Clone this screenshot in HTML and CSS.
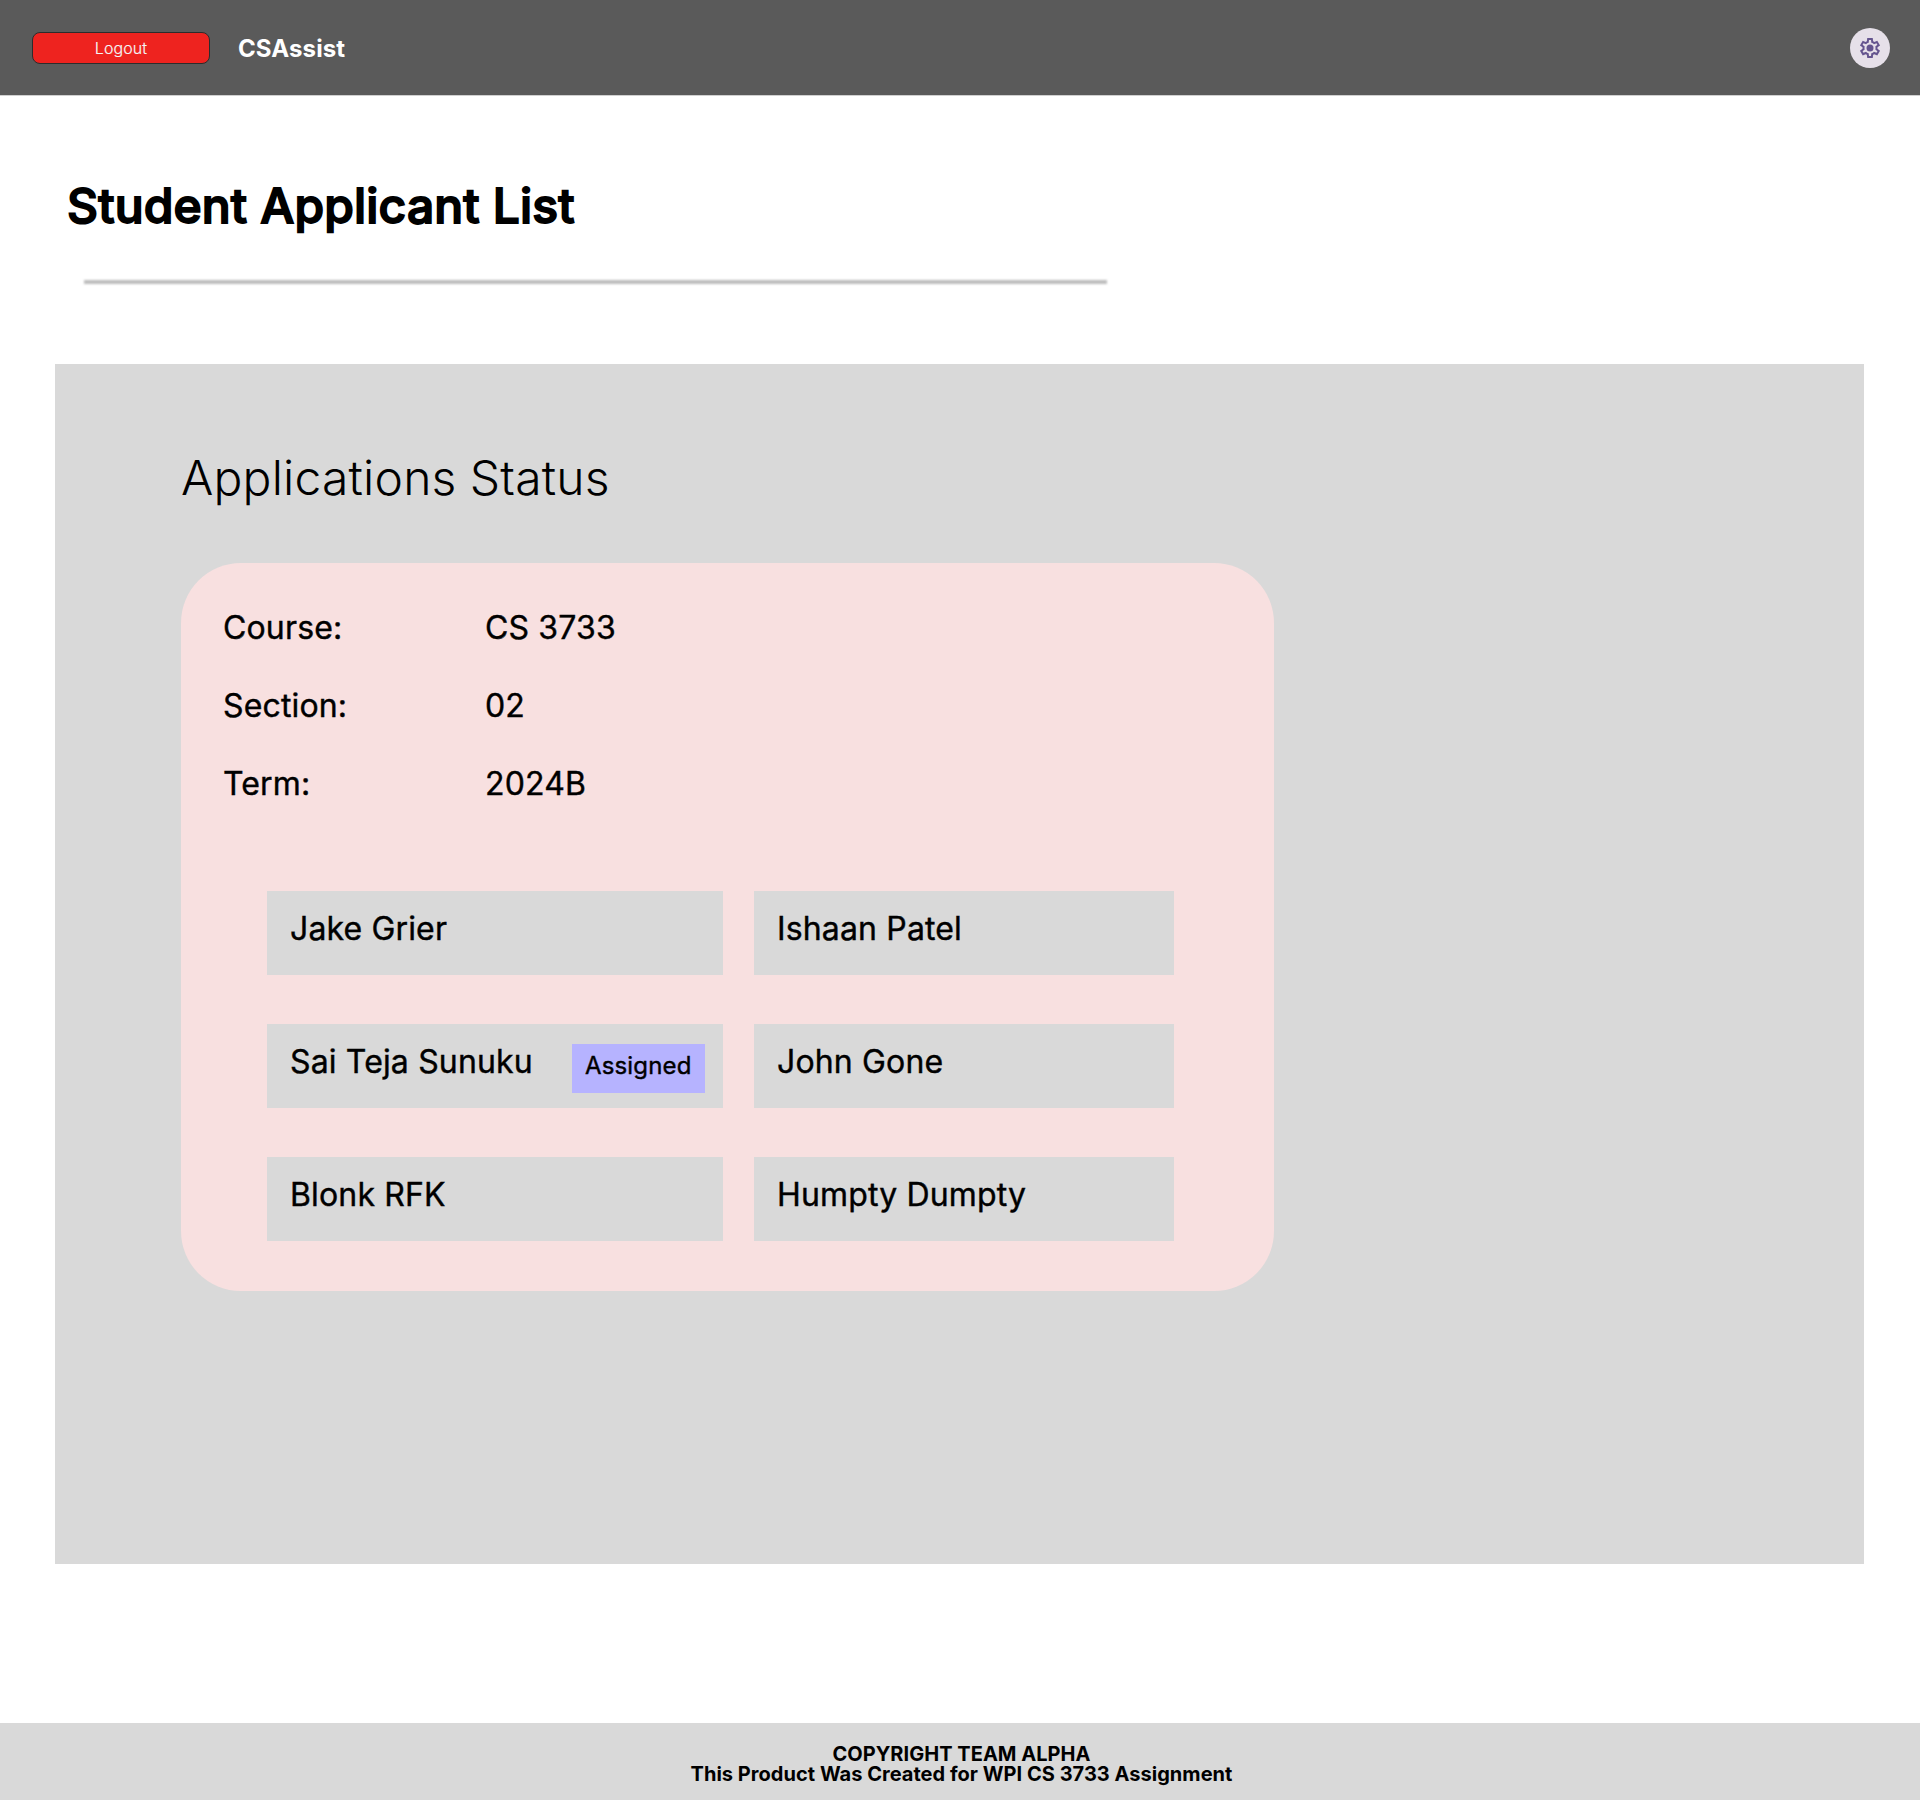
FILE: index.html
```html
<!DOCTYPE html>
<html lang="en">
<head>
<meta charset="utf-8">
<title>CSAssist - Student Applicant List</title>
<link rel="stylesheet" href="styles.css">
</head>
<body>
<header class="topbar">
  <button class="logout" type="button">Logout</button>
  <span class="brand">CSAssist</span>
  <button class="settings" type="button" aria-label="Settings">
    <svg class="settings-icon" viewBox="0 0 24 24" aria-hidden="true">
      <path fill-rule="evenodd" d="M9.25 22L8.85 18.8C8.63 18.72 8.43 18.62 8.24 18.5C8.05 18.38 7.86 18.26 7.675 18.125L4.7 19.375L1.95 14.625L4.525 12.675C4.51 12.56 4.5 12.45 4.5 12.34V11.66C4.5 11.55 4.51 11.44 4.525 11.325L1.95 9.375L4.7 4.625L7.675 5.875C7.86 5.74 8.05 5.62 8.25 5.5C8.45 5.38 8.65 5.28 8.85 5.2L9.25 2H14.75L15.15 5.2C15.37 5.28 15.57 5.38 15.76 5.5C15.95 5.62 16.14 5.74 16.325 5.875L19.3 4.625L22.05 9.375L19.475 11.325C19.49 11.44 19.5 11.55 19.5 11.66V12.34C19.5 12.45 19.48 12.56 19.45 12.675L22.025 14.625L19.275 19.375L16.325 18.125C16.14 18.26 15.95 18.38 15.75 18.5C15.55 18.62 15.35 18.72 15.15 18.8L14.75 22H9.25ZM11 20H12.975L13.325 17.35C13.84 17.22 14.32 17.02 14.76 16.76C15.2 16.5 15.61 16.19 15.975 15.825L18.45 16.85L19.425 15.15L17.275 13.525C17.36 13.29 17.42 13.05 17.45 12.79C17.48 12.53 17.5 12.27 17.5 12C17.5 11.73 17.48 11.47 17.45 11.21C17.42 10.95 17.36 10.71 17.275 10.475L19.425 8.85L18.45 7.15L15.975 8.2C15.61 7.82 15.2 7.5 14.76 7.24C14.32 6.98 13.84 6.78 13.325 6.65L13 4H11.025L10.675 6.65C10.16 6.78 9.68 6.98 9.24 7.24C8.8 7.5 8.39 7.81 8.025 8.175L5.55 7.15L4.575 8.85L6.725 10.45C6.64 10.7 6.58 10.95 6.55 11.2C6.52 11.45 6.5 11.72 6.5 12C6.5 12.27 6.52 12.53 6.55 12.775C6.58 13.03 6.64 13.28 6.725 13.525L4.575 15.15L5.55 16.85L8.025 15.8C8.39 16.18 8.8 16.5 9.24 16.76C9.68 17.02 10.16 17.22 10.675 17.35L11 20Z"/>
      <circle cx="12" cy="12" r="3.5"/>
    </svg>
  </button>
</header>

<main class="page">
  <h1 class="page-title">Student Applicant List</h1>
  <hr class="divider">
  <section class="panel">
    <h2 class="panel-title">Applications Status</h2>
    <article class="card">
      <dl class="details">
        <dt>Course:</dt><dd>CS 3733</dd>
        <dt>Section:</dt><dd>02</dd>
        <dt>Term:</dt><dd>2024B</dd>
      </dl>
      <ul class="applicants">
        <li class="applicant">Jake Grier</li>
        <li class="applicant">Ishaan Patel</li>
        <li class="applicant">Sai Teja Sunuku <span class="badge">Assigned</span></li>
        <li class="applicant">John Gone</li>
        <li class="applicant">Blonk RFK</li>
        <li class="applicant">Humpty Dumpty</li>
      </ul>
    </article>
  </section>
</main>

<footer class="footer">
  <p>COPYRIGHT TEAM ALPHA<br>This Product Was Created for WPI CS 3733 Assignment</p>
</footer>
</body>
</html>
```
FILE: styles.css
```css
* {
  box-sizing: border-box;
  margin: 0;
  padding: 0;
}

body {
  display: flex;
  flex-direction: column;
  height: 1800px;
  background: #fff;
  color: #000;
  font-family: Inter, "Liberation Sans", sans-serif;
}

.topbar {
  display: flex;
  align-items: center;
  flex: none;
  height: 96px;
  padding: 0 30px 0 32px;
  background: #5a5a5a;
  border-bottom: 1px solid #d0d0d0;
}

.logout {
  width: 178px;
  height: 32px;
  border: 1px solid #2c2c2c;
  border-radius: 8px;
  background: #ee231f;
  color: #f5f5f5;
  font: 300 16px/30px Inter, "Liberation Sans", sans-serif;
  letter-spacing: 0.1px;
  -webkit-text-stroke: 0.15px #f5f5f5;
}

.brand {
  margin-left: 28px;
  padding-top: 2px;
  color: #fff;
  font-size: 24px;
  font-weight: 700;
  line-height: 30px;
  letter-spacing: 0.1px;
}

.settings {
  display: flex;
  align-items: center;
  justify-content: center;
  width: 40px;
  height: 40px;
  margin-left: auto;
  border: 0;
  border-radius: 50%;
  background: #e6e0e9;
}

.settings-icon {
  width: 24px;
  height: 24px;
  fill: #65558f;
}

.page {
  flex: 1;
  padding: 80px 56px 0 55px;
}

.page-title {
  margin-left: 12px;
  font-size: 48px;
  font-weight: 500;
  line-height: 60px;
  letter-spacing: 0.15px;
  -webkit-text-stroke: 1.8px #000;
}

.divider {
  width: 1023px;
  height: 4px;
  margin: 44px 0 80px 29px;
  border: 0;
  background: #bdbdbd;
  filter: blur(1px);
}

.panel {
  height: 1200px;
  padding: 84px 0 0 126px;
  background: #d9d9d9;
}

.panel-title {
  font-size: 48px;
  font-weight: 300;
  line-height: 60px;
  letter-spacing: 0.2px;
  word-spacing: -0.5px;
}

.card {
  width: 1093px;
  height: 728px;
  margin-top: 55px;
  padding: 45px 0 0 42px;
  border-radius: 60px;
  background: #f8e0e0;
  font-size: 32px;
  font-weight: 400;
  line-height: 40px;
  letter-spacing: 0.15px;
  -webkit-text-stroke: 0.4px #000;
}

.details {
  display: grid;
  grid-template-columns: 262px auto;
  row-gap: 38px;
}

.applicants {
  display: grid;
  grid-template-columns: 456px 420px;
  gap: 49px 31px;
  margin: 87px 0 0 44px;
  list-style: none;
}

.applicant {
  display: flex;
  justify-content: space-between;
  height: 84px;
  padding: 18px 18px 0 23px;
  background: #d9d9d9;
}

.badge {
  width: 133px;
  height: 49px;
  margin-top: 2px;
  padding: 7px 0 0 13px;
  background: #b6b3ff;
  font-size: 24px;
  line-height: 30px;
}

.footer {
  flex: none;
  height: 77px;
  padding: 21px 0 0 3px;
  background: #d9d9d9;
  font-size: 20px;
  font-weight: 700;
  line-height: 20px;
  letter-spacing: 0.03px;
  text-align: center;
}
```
